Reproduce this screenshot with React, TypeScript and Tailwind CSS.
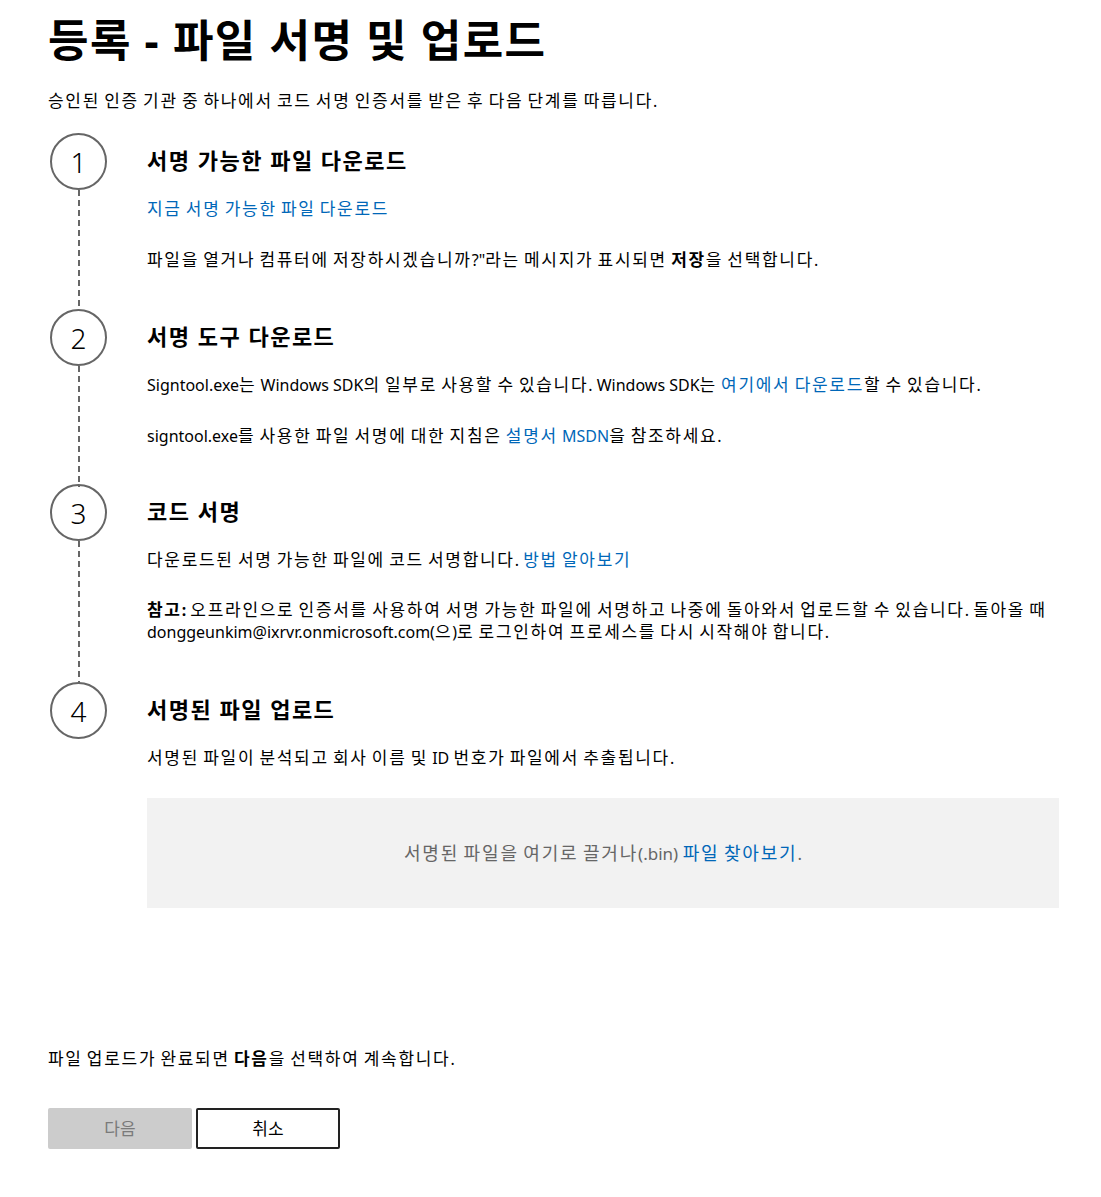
import { Children, cloneElement, isValidElement, type ReactNode } from 'react'

const font = 'font-["Noto_Sans","Noto_Sans_CJK_KR",sans-serif]'

// Hangul in the CJK face runs narrower than the original, so widen those runs a little
const HANGUL = /([\u1100-\u11ff\u3130-\u318f\uac00-\ud7af]+)/

function ko(node: ReactNode): ReactNode {
  return Children.map(node, (child) => {
    if (typeof child === 'string') {
      return child.split(HANGUL).map((part, i) =>
        i % 2 === 1 ? (
          <span key={i} className="text-[1.0625em] tracking-[0.1em]">
            {part}
          </span>
        ) : (
          part
        ),
      )
    }
    if (isValidElement<{ children?: ReactNode }>(child) && child.props.children) {
      return cloneElement(child, undefined, ko(child.props.children))
    }
    return child
  })
}

function Link({ children }: { children?: ReactNode }) {
  return (
    <a href="#" className="text-[#0067b8]">
      {children}
    </a>
  )
}

function Step({
  num,
  title,
  last,
  gap = 'pb-[38px]',
  children,
}: {
  num: number
  title: string
  last?: boolean
  gap?: string
  children: ReactNode
}) {
  return (
    <div className={`flex ${last ? '' : gap}`}>
      <div className="flex w-[97px] shrink-0 flex-col">
        <div className="flex h-[57px] w-[57px] items-center justify-center rounded-full border-2 border-[#666] text-[28px] font-light text-black">
          {num}
        </div>
        {!last && (
          <div className="-mb-[40px] ml-[27.5px] w-[2px] flex-1 bg-[repeating-linear-gradient(to_bottom,#666_0_6px,transparent_6px_10px)]" />
        )}
      </div>
      <div className="min-w-0 flex-1">
        <h2 className="flex h-[57px] items-center pb-[4px] text-[22px] font-bold tracking-[1.5px] text-black">
          {title}
        </h2>
        {ko(children)}
      </div>
    </div>
  )
}

export default function App() {
  return (
    <div className={`${font} min-h-[1197px] bg-white pl-[48px] pr-[42px] text-[16px] leading-[22px] text-black`}>
      <h1 className="pt-[12px] text-[44px] font-bold leading-[56px] tracking-[1.4px]">등록 - 파일 서명 및 업로드</h1>
      <p className="mt-[22px]">{ko('승인된 인증 기관 중 하나에서 코드 서명 인증서를 받은 후 다음 단계를 따릅니다.')}</p>

      <div className="mt-[21px] pl-[2px]">
        <Step num={1} title="서명 가능한 파일 다운로드">
          <p className="mt-2">
            <Link>지금 서명 가능한 파일 다운로드</Link>
          </p>
          <p className="mt-[29px]">
            파일을 열거나 컴퓨터에 저장하시겠습니까?"라는 메시지가 표시되면 <b>저장</b>을 선택합니다.
          </p>
        </Step>

        <Step num={2} title="서명 도구 다운로드" gap="pb-[37px]">
          <p className="mt-2">
            Signtool.exe는 Windows SDK의 일부로 사용할 수 있습니다. Windows SDK는 <Link>여기에서 다운로드</Link>할 수
            있습니다.
          </p>
          <p className="mt-[29px]">
            signtool.exe를 사용한 파일 서명에 대한 지침은 <Link>설명서 MSDN</Link>을 참조하세요.
          </p>
        </Step>

        <Step num={3} title="코드 서명" gap="pb-[39px]">
          <p className="mt-2">
            다운로드된 서명 가능한 파일에 코드 서명합니다. <Link>방법 알아보기</Link>
          </p>
          <p className="mt-[28px]">
            <b>참고:</b> 오프라인으로 인증서를 사용하여 서명 가능한 파일에 서명하고 나중에 돌아와서 업로드할 수 있습니다.
            돌아올 때 donggeunkim@ixrvr.onmicrosoft.com(으)로 로그인하여 프로세스를 다시 시작해야 합니다.
          </p>
        </Step>

        <Step num={4} title="서명된 파일 업로드" last>
          <p className="mt-2">서명된 파일이 분석되고 회사 이름 및 ID 번호가 파일에서 추출됩니다.</p>
          <div className="mt-[29px] flex h-[110px] items-center justify-center bg-[#f2f2f2] text-[17px] text-[#666]">
            <span>
              서명된 파일을 여기로 끌거나(.bin) <Link>파일 찾아보기</Link>.
            </span>
          </div>
        </Step>
      </div>

      <p className="mt-[140px]">
        {ko(
          <>
            파일 업로드가 완료되면 <b>다음</b>을 선택하여 계속합니다.
          </>,
        )}
      </p>

      <div className="mt-[38px] flex gap-[4px]">
        <button disabled className="h-[41px] w-[144px] rounded-[2px] bg-[#cccccc] text-[17px] text-[#7a7a7a]">
          다음
        </button>
        <button className="h-[41px] w-[144px] rounded-[2px] border-2 border-[#222] bg-white text-[17px] text-black">
          취소
        </button>
      </div>
    </div>
  )
}
